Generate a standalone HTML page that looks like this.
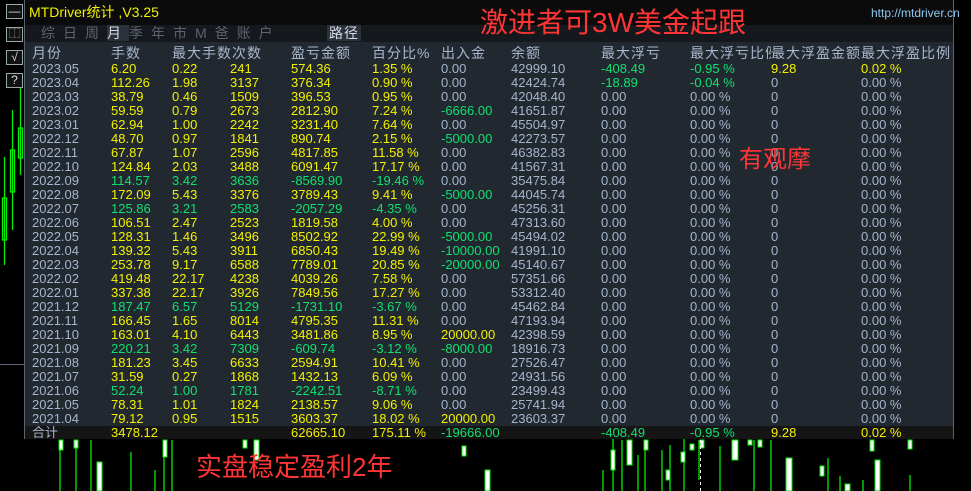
<!DOCTYPE html>
<html><head><meta charset="utf-8">
<style>
*{margin:0;padding:0;box-sizing:border-box}
body{width:971px;height:491px;background:#000;position:relative;overflow:hidden;font-family:"Liberation Sans","Noto Sans CJK SC",sans-serif}
.panel{position:absolute;left:24px;top:0;width:930px;height:439px;border:1px solid #5a6370;border-top:none;background:#22282f}
.title{position:absolute;left:0;top:0;width:100%;height:25px;background:#0b0b0b}
.tabs{position:absolute;left:0;top:25px;width:100%;height:17px;background:#15181c}
.t{position:absolute;font-size:13px;white-space:nowrap;line-height:14px}
.hd{position:absolute;top:44px;font-size:14px;color:#a8b6cc;white-space:nowrap;line-height:18px;letter-spacing:1px}
.row{position:absolute;left:0;height:14px;width:100%;font-size:13px;line-height:14px;white-space:nowrap}
.row span{position:absolute;top:0}
.g{color:#a6b4cc}.y{color:#f2f200}.n{color:#10e070}
.c1{left:7px}.c2{left:86px}.c3{left:147px}.c4{left:205px}.c5{left:266px}.c6{left:347px}.c7{left:416px}.c8{left:486px}.c9{left:576px}.c10{left:665px}.c11{left:746px}.c12{left:836px}
.red{position:absolute;color:#ff3535;white-space:nowrap}
.tb{position:absolute;left:6px;width:17px;height:15px;border:1px solid #9aa;color:#dde;font-size:12px;line-height:13px;text-align:center;background:#111}
</style></head><body>
<svg width="971" height="491" style="position:absolute;left:0;top:0">
<g stroke="#00ee00" fill="none" stroke-width="1.3">
<line x1="4.5" y1="157" x2="4.5" y2="265"/><rect x="2.5" y="198" width="4" height="42"/>
<line x1="12.5" y1="110" x2="12.5" y2="230"/><rect x="10.5" y="150" width="4" height="42"/>
<line x1="20.5" y1="80" x2="20.5" y2="175"/><rect x="18.5" y="128" width="4" height="30"/>
<line x1="60" y1="440" x2="60" y2="491"/><line x1="76" y1="440" x2="76" y2="491"/>
<line x1="91" y1="440" x2="91" y2="491"/><line x1="131" y1="452" x2="131" y2="491"/>
<line x1="155" y1="470" x2="155" y2="491"/><line x1="164" y1="440" x2="164" y2="491"/>
<line x1="172" y1="440" x2="172" y2="491"/><line x1="613" y1="430" x2="613" y2="491"/>
<line x1="622" y1="440" x2="622" y2="491"/><line x1="645" y1="440" x2="645" y2="491"/>
<line x1="670" y1="445" x2="670" y2="491"/><line x1="684" y1="430" x2="684" y2="491"/>
<line x1="699" y1="440" x2="699" y2="480"/><line x1="720" y1="446" x2="720" y2="491"/>
<line x1="754" y1="440" x2="754" y2="491"/><line x1="771" y1="440" x2="771" y2="491"/>
<line x1="828" y1="458" x2="828" y2="491"/><line x1="840" y1="476" x2="840" y2="491"/>
<line x1="863" y1="480" x2="863" y2="491"/><line x1="603" y1="470" x2="603" y2="491"/>
<line x1="638" y1="455" x2="638" y2="491"/><line x1="662" y1="450" x2="662" y2="491"/>
<line x1="910" y1="475" x2="910" y2="491"/>
</g>
<g fill="#fff" stroke="#00ee00" stroke-width="1">
<rect x="59" y="440" width="4" height="10"/><rect x="74" y="440" width="4" height="8"/>
<rect x="97" y="462" width="5" height="29"/><rect x="163" y="440" width="4" height="17"/>
<rect x="243" y="440" width="4" height="8"/><rect x="254" y="440" width="5" height="20"/>
<rect x="462" y="446" width="4" height="10"/><rect x="485" y="470" width="5" height="21"/>
<rect x="611" y="450" width="4" height="20"/><rect x="627" y="440" width="5" height="25"/>
<rect x="644" y="440" width="4" height="10"/><rect x="700" y="440" width="4" height="8"/>
<rect x="732" y="440" width="6" height="20"/><rect x="748" y="440" width="4" height="5"/>
<rect x="758" y="440" width="4" height="7"/><rect x="786" y="458" width="6" height="33"/>
<rect x="870" y="440" width="4" height="11"/><rect x="875" y="460" width="5" height="31"/>
<rect x="908" y="440" width="4" height="9"/><rect x="681" y="452" width="4" height="10"/>
<rect x="666" y="470" width="4" height="10"/><rect x="690" y="444" width="4" height="6"/>
<rect x="845" y="484" width="5" height="7"/><rect x="820" y="466" width="4" height="10"/>
</g>
<line x1="700.5" y1="440" x2="700.5" y2="491" stroke="#fff" stroke-dasharray="3,3"/>
<line x1="0" y1="364.5" x2="24" y2="364.5" stroke="#667" />
</svg>
<div class="tb" style="top:4px">—</div>
<div class="tb" style="top:27px;font-size:11px">⿰</div>
<div class="tb" style="top:50px">√</div>
<div class="tb" style="top:73px">?</div>
<div class="panel">
<div class="title"></div>
<div class="tabs"></div>
<div class="t" style="left:4px;top:5px;color:#f2f200;font-size:14px">MTDriver统计 ,V3.25</div>
<div class="t" style="left:16px;top:26px;color:#5c6470;font-size:14px;letter-spacing:8px">综日周<span style="color:#d8dde6;background:#2b323b">月</span>季年市M爸账户</div>
<div class="t" style="left:302px;top:25px;color:#d8dde6;background:#2b323b;font-size:14px;padding:1px 2px;letter-spacing:1px">路径</div>
<div class="t" style="left:846px;top:6px;color:#8ec8f0;font-size:12px">http://mtdriver.cn</div>
<div class="hd" style="left:7px">月份</div><div class="hd" style="left:86px">手数</div><div class="hd" style="left:147px">最大手数次数</div><div class="hd" style="left:266px">盈亏金额</div><div class="hd" style="left:347px">百分比%</div><div class="hd" style="left:416px">出入金</div><div class="hd" style="left:486px">余额</div><div class="hd" style="left:576px">最大浮亏</div><div class="hd" style="left:665px">最大浮亏比例</div><div class="hd" style="left:746px;background:#22282f">最大浮盈金额</div><div class="hd" style="left:836px;background:#22282f">最大浮盈比例</div>
<div class="row" style="top:62px"><span class="c1 g">2023.05</span><span class="c2 y">6.20</span><span class="c3 y">0.22</span><span class="c4 y">241</span><span class="c5 y">574.36</span><span class="c6 y">1.35 %</span><span class="c7 g">0.00</span><span class="c8 g">42999.10</span><span class="c9 n">-408.49</span><span class="c10 n">-0.95 %</span><span class="c11 y">9.28</span><span class="c12 y">0.02 %</span></div>
<div class="row" style="top:76px"><span class="c1 g">2023.04</span><span class="c2 y">112.26</span><span class="c3 y">1.98</span><span class="c4 y">3137</span><span class="c5 y">376.34</span><span class="c6 y">0.90 %</span><span class="c7 g">0.00</span><span class="c8 g">42424.74</span><span class="c9 n">-18.89</span><span class="c10 n">-0.04 %</span><span class="c11 g">0</span><span class="c12 g">0.00 %</span></div>
<div class="row" style="top:90px"><span class="c1 g">2023.03</span><span class="c2 y">38.79</span><span class="c3 y">0.46</span><span class="c4 y">1509</span><span class="c5 y">396.53</span><span class="c6 y">0.95 %</span><span class="c7 g">0.00</span><span class="c8 g">42048.40</span><span class="c9 g">0.00</span><span class="c10 g">0.00 %</span><span class="c11 g">0</span><span class="c12 g">0.00 %</span></div>
<div class="row" style="top:104px"><span class="c1 g">2023.02</span><span class="c2 y">59.59</span><span class="c3 y">0.79</span><span class="c4 y">2673</span><span class="c5 y">2812.90</span><span class="c6 y">7.24 %</span><span class="c7 n">-6666.00</span><span class="c8 g">41651.87</span><span class="c9 g">0.00</span><span class="c10 g">0.00 %</span><span class="c11 g">0</span><span class="c12 g">0.00 %</span></div>
<div class="row" style="top:118px"><span class="c1 g">2023.01</span><span class="c2 y">62.94</span><span class="c3 y">1.00</span><span class="c4 y">2242</span><span class="c5 y">3231.40</span><span class="c6 y">7.64 %</span><span class="c7 g">0.00</span><span class="c8 g">45504.97</span><span class="c9 g">0.00</span><span class="c10 g">0.00 %</span><span class="c11 g">0</span><span class="c12 g">0.00 %</span></div>
<div class="row" style="top:132px"><span class="c1 g">2022.12</span><span class="c2 y">48.70</span><span class="c3 y">0.97</span><span class="c4 y">1841</span><span class="c5 y">890.74</span><span class="c6 y">2.15 %</span><span class="c7 n">-5000.00</span><span class="c8 g">42273.57</span><span class="c9 g">0.00</span><span class="c10 g">0.00 %</span><span class="c11 g">0</span><span class="c12 g">0.00 %</span></div>
<div class="row" style="top:146px"><span class="c1 g">2022.11</span><span class="c2 y">67.87</span><span class="c3 y">1.07</span><span class="c4 y">2596</span><span class="c5 y">4817.85</span><span class="c6 y">11.58 %</span><span class="c7 g">0.00</span><span class="c8 g">46382.83</span><span class="c9 g">0.00</span><span class="c10 g">0.00 %</span><span class="c11 g">0</span><span class="c12 g">0.00 %</span></div>
<div class="row" style="top:160px"><span class="c1 g">2022.10</span><span class="c2 y">124.84</span><span class="c3 y">2.03</span><span class="c4 y">3488</span><span class="c5 y">6091.47</span><span class="c6 y">17.17 %</span><span class="c7 g">0.00</span><span class="c8 g">41567.31</span><span class="c9 g">0.00</span><span class="c10 g">0.00 %</span><span class="c11 g">0</span><span class="c12 g">0.00 %</span></div>
<div class="row" style="top:174px"><span class="c1 g">2022.09</span><span class="c2 n">114.57</span><span class="c3 n">3.42</span><span class="c4 n">3636</span><span class="c5 n">-8569.90</span><span class="c6 n">-19.46 %</span><span class="c7 g">0.00</span><span class="c8 g">35475.84</span><span class="c9 g">0.00</span><span class="c10 g">0.00 %</span><span class="c11 g">0</span><span class="c12 g">0.00 %</span></div>
<div class="row" style="top:188px"><span class="c1 g">2022.08</span><span class="c2 y">172.09</span><span class="c3 y">5.43</span><span class="c4 y">3376</span><span class="c5 y">3789.43</span><span class="c6 y">9.41 %</span><span class="c7 n">-5000.00</span><span class="c8 g">44045.74</span><span class="c9 g">0.00</span><span class="c10 g">0.00 %</span><span class="c11 g">0</span><span class="c12 g">0.00 %</span></div>
<div class="row" style="top:202px"><span class="c1 g">2022.07</span><span class="c2 n">125.86</span><span class="c3 n">3.21</span><span class="c4 n">2583</span><span class="c5 n">-2057.29</span><span class="c6 n">-4.35 %</span><span class="c7 g">0.00</span><span class="c8 g">45256.31</span><span class="c9 g">0.00</span><span class="c10 g">0.00 %</span><span class="c11 g">0</span><span class="c12 g">0.00 %</span></div>
<div class="row" style="top:216px"><span class="c1 g">2022.06</span><span class="c2 y">106.51</span><span class="c3 y">2.47</span><span class="c4 y">2523</span><span class="c5 y">1819.58</span><span class="c6 y">4.00 %</span><span class="c7 g">0.00</span><span class="c8 g">47313.60</span><span class="c9 g">0.00</span><span class="c10 g">0.00 %</span><span class="c11 g">0</span><span class="c12 g">0.00 %</span></div>
<div class="row" style="top:230px"><span class="c1 g">2022.05</span><span class="c2 y">128.31</span><span class="c3 y">1.46</span><span class="c4 y">3496</span><span class="c5 y">8502.92</span><span class="c6 y">22.99 %</span><span class="c7 n">-5000.00</span><span class="c8 g">45494.02</span><span class="c9 g">0.00</span><span class="c10 g">0.00 %</span><span class="c11 g">0</span><span class="c12 g">0.00 %</span></div>
<div class="row" style="top:244px"><span class="c1 g">2022.04</span><span class="c2 y">139.32</span><span class="c3 y">5.43</span><span class="c4 y">3911</span><span class="c5 y">6850.43</span><span class="c6 y">19.49 %</span><span class="c7 n">-10000.00</span><span class="c8 g">41991.10</span><span class="c9 g">0.00</span><span class="c10 g">0.00 %</span><span class="c11 g">0</span><span class="c12 g">0.00 %</span></div>
<div class="row" style="top:258px"><span class="c1 g">2022.03</span><span class="c2 y">253.78</span><span class="c3 y">9.17</span><span class="c4 y">6588</span><span class="c5 y">7789.01</span><span class="c6 y">20.85 %</span><span class="c7 n">-20000.00</span><span class="c8 g">45140.67</span><span class="c9 g">0.00</span><span class="c10 g">0.00 %</span><span class="c11 g">0</span><span class="c12 g">0.00 %</span></div>
<div class="row" style="top:272px"><span class="c1 g">2022.02</span><span class="c2 y">419.48</span><span class="c3 y">22.17</span><span class="c4 y">4238</span><span class="c5 y">4039.26</span><span class="c6 y">7.58 %</span><span class="c7 g">0.00</span><span class="c8 g">57351.66</span><span class="c9 g">0.00</span><span class="c10 g">0.00 %</span><span class="c11 g">0</span><span class="c12 g">0.00 %</span></div>
<div class="row" style="top:286px"><span class="c1 g">2022.01</span><span class="c2 y">337.38</span><span class="c3 y">22.17</span><span class="c4 y">3926</span><span class="c5 y">7849.56</span><span class="c6 y">17.27 %</span><span class="c7 g">0.00</span><span class="c8 g">53312.40</span><span class="c9 g">0.00</span><span class="c10 g">0.00 %</span><span class="c11 g">0</span><span class="c12 g">0.00 %</span></div>
<div class="row" style="top:300px"><span class="c1 g">2021.12</span><span class="c2 n">187.47</span><span class="c3 n">6.57</span><span class="c4 n">5129</span><span class="c5 n">-1731.10</span><span class="c6 n">-3.67 %</span><span class="c7 g">0.00</span><span class="c8 g">45462.84</span><span class="c9 g">0.00</span><span class="c10 g">0.00 %</span><span class="c11 g">0</span><span class="c12 g">0.00 %</span></div>
<div class="row" style="top:314px"><span class="c1 g">2021.11</span><span class="c2 y">166.45</span><span class="c3 y">1.65</span><span class="c4 y">8014</span><span class="c5 y">4795.35</span><span class="c6 y">11.31 %</span><span class="c7 g">0.00</span><span class="c8 g">47193.94</span><span class="c9 g">0.00</span><span class="c10 g">0.00 %</span><span class="c11 g">0</span><span class="c12 g">0.00 %</span></div>
<div class="row" style="top:328px"><span class="c1 g">2021.10</span><span class="c2 y">163.01</span><span class="c3 y">4.10</span><span class="c4 y">6443</span><span class="c5 y">3481.86</span><span class="c6 y">8.95 %</span><span class="c7 y">20000.00</span><span class="c8 g">42398.59</span><span class="c9 g">0.00</span><span class="c10 g">0.00 %</span><span class="c11 g">0</span><span class="c12 g">0.00 %</span></div>
<div class="row" style="top:342px"><span class="c1 g">2021.09</span><span class="c2 n">220.21</span><span class="c3 n">3.42</span><span class="c4 n">7309</span><span class="c5 n">-609.74</span><span class="c6 n">-3.12 %</span><span class="c7 n">-8000.00</span><span class="c8 g">18916.73</span><span class="c9 g">0.00</span><span class="c10 g">0.00 %</span><span class="c11 g">0</span><span class="c12 g">0.00 %</span></div>
<div class="row" style="top:356px"><span class="c1 g">2021.08</span><span class="c2 y">181.23</span><span class="c3 y">3.45</span><span class="c4 y">6633</span><span class="c5 y">2594.91</span><span class="c6 y">10.41 %</span><span class="c7 g">0.00</span><span class="c8 g">27526.47</span><span class="c9 g">0.00</span><span class="c10 g">0.00 %</span><span class="c11 g">0</span><span class="c12 g">0.00 %</span></div>
<div class="row" style="top:370px"><span class="c1 g">2021.07</span><span class="c2 y">31.59</span><span class="c3 y">0.27</span><span class="c4 y">1868</span><span class="c5 y">1432.13</span><span class="c6 y">6.09 %</span><span class="c7 g">0.00</span><span class="c8 g">24931.56</span><span class="c9 g">0.00</span><span class="c10 g">0.00 %</span><span class="c11 g">0</span><span class="c12 g">0.00 %</span></div>
<div class="row" style="top:384px"><span class="c1 g">2021.06</span><span class="c2 n">52.24</span><span class="c3 n">1.00</span><span class="c4 n">1781</span><span class="c5 n">-2242.51</span><span class="c6 n">-8.71 %</span><span class="c7 g">0.00</span><span class="c8 g">23499.43</span><span class="c9 g">0.00</span><span class="c10 g">0.00 %</span><span class="c11 g">0</span><span class="c12 g">0.00 %</span></div>
<div class="row" style="top:398px"><span class="c1 g">2021.05</span><span class="c2 y">78.31</span><span class="c3 y">1.01</span><span class="c4 y">1824</span><span class="c5 y">2138.57</span><span class="c6 y">9.06 %</span><span class="c7 g">0.00</span><span class="c8 g">25741.94</span><span class="c9 g">0.00</span><span class="c10 g">0.00 %</span><span class="c11 g">0</span><span class="c12 g">0.00 %</span></div>
<div class="row" style="top:412px"><span class="c1 g">2021.04</span><span class="c2 y">79.12</span><span class="c3 y">0.95</span><span class="c4 y">1515</span><span class="c5 y">3603.37</span><span class="c6 y">18.02 %</span><span class="c7 y">20000.00</span><span class="c8 g">23603.37</span><span class="c9 g">0.00</span><span class="c10 g">0.00 %</span><span class="c11 g">0</span><span class="c12 g">0.00 %</span></div>
<div class="row" style="top:426px;height:13px;background:#151515"><span class="c1 g">合计</span><span class="c2 y">3478.12</span><span class="c5 y">62665.10</span><span class="c6 y">175.11 %</span><span class="c7 n">-19666.00</span><span class="c9 n">-408.49</span><span class="c10 n">-0.95 %</span><span class="c11 y">9.28</span><span class="c12 y">0.02 %</span></div>
</div>
<div class="red" style="left:480px;top:5px;font-size:28px;line-height:36px">激进者可3W美金起跟</div>
<div class="red" style="left:739px;top:145px;font-size:24px;line-height:30px">有观摩</div>
<div class="red" style="left:196px;top:450px;font-size:26px;line-height:34px">实盘稳定盈利2年</div>
</body></html>
